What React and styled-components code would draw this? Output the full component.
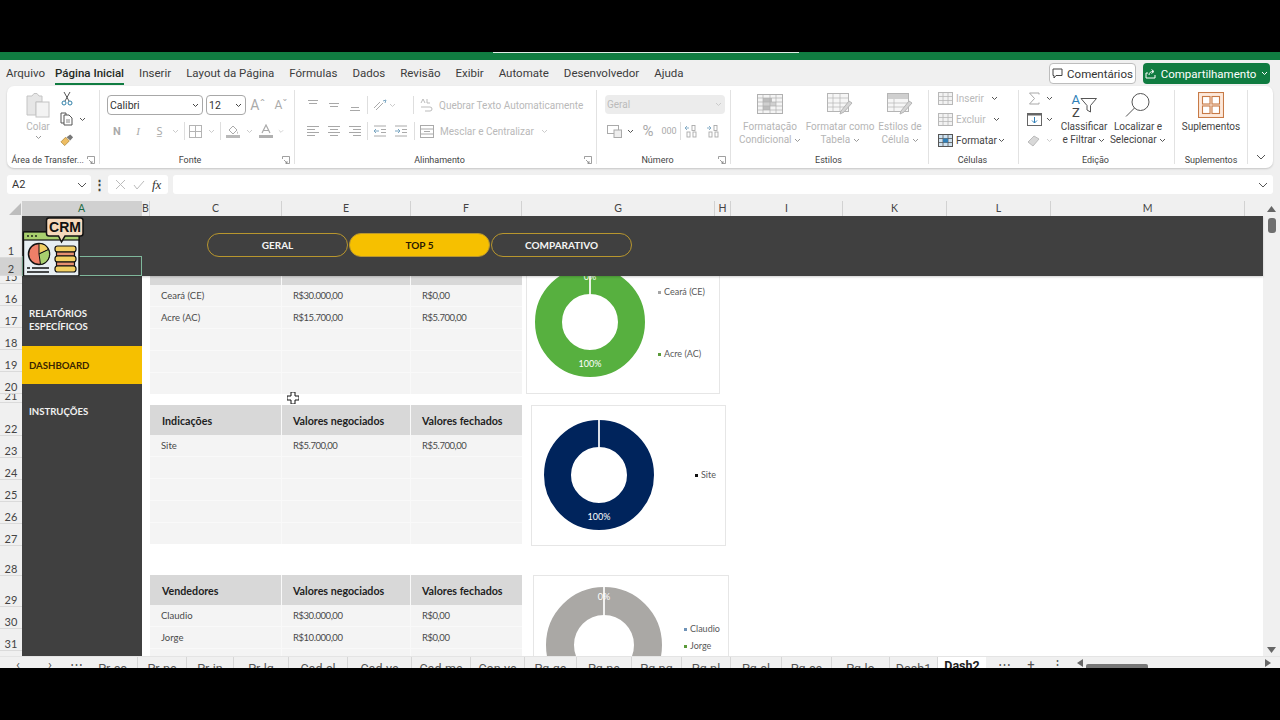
import React from 'react';
import styled, { createGlobalStyle } from 'styled-components';

const Global = createGlobalStyle`
  * { box-sizing: border-box; }
  html, body { margin: 0; padding: 0; background: #000; }
`;

const Screen = styled.div`
  width: 1280px; height: 720px; background: #000; overflow: hidden;
  display: flex; flex-direction: column; position: relative;
  font-family: Roboto, "Noto Sans", sans-serif;
`;
const TopBlack = styled.div`height: 52px; flex: none; background: #000;`;
const GreenBand = styled.div`height: 8px; flex: none; background: #107c41;`;
const ProgressLine = styled.div`width: 306px; height: 1px; margin-left: 493px; background: #dfeee6;`;
const Chrome = styled.div`height: 141px; flex: none; background: #f0f0f0; display: flex; flex-direction: column;`;

const MenuRow = styled.div`height: 26px; flex: none; display: flex; align-items: flex-start; padding: 3px 10px 0 6px;`;
const MenuItem = styled.div`
  font-size: 11.5px; line-height: 20px; margin-right: 15px; color: ${p => p.$on ? '#1f2a24' : '#3c3c3c'};
  font-weight: ${p => p.$on ? 500 : 400}; height: 20px; white-space: nowrap;
  box-shadow: ${p => p.$on ? '0 2px 0 #107c41' : 'none'};
  &:first-child { margin-right: 10px; }
`;
const MenuSpacer = styled.div`flex: 1;`;
const CommentBtn = styled.div`
  width: 87px; height: 21px; border: 1px solid #bdbdbd; border-radius: 4px; background: #fff; color: #333;
  font-size: 11.5px; display: flex; align-items: center; justify-content: center; gap: 4px; margin-right: 7px;
`;
const ShareBtn = styled.div`
  width: 127px; height: 21px; border-radius: 4px; background: #107c41; color: #fff;
  font-size: 11.5px; display: flex; align-items: center; justify-content: center; gap: 5px;
`;

const Ribbon = styled.div`
  height: 82px; flex: none; margin: 0 7px; width: 1266px; background: #fff; border-radius: 7px;
  box-shadow: 0 1px 2px rgba(0,0,0,.18); display: flex; padding: 4px 0;
  font-size: 10px; color: #444;
`;
const Group = styled.div`
  width: ${p => p.$w}px; flex: none; height: 74px; display: flex; flex-direction: column;
  border-right: ${p => p.$last ? 'none' : '1px solid #e2e2e2'};
`;
const GroupBody = styled.div`flex: 1; display: flex; min-height: 0;`;
const GroupStack = styled.div`flex: 1; display: flex; flex-direction: column; min-width: 0; padding-left: ${p => p.$pl || 0}px; padding-top: ${p => p.$pt || 0}px; gap: ${p => p.$gap || 0}px;`;
const GroupLabel = styled.div`
  height: 12px; flex: none; display: grid; grid-template-columns: 1fr auto 1fr; align-items: center;
  font-size: 9px; color: #444; line-height: 12px; margin-bottom: -2px; white-space: nowrap;
`;
const LabelText = styled.span`grid-column: 2; transform: translateX(${p => p.$dx || 0}px);`;
const LauncherWrap = styled.span`grid-column: 3; justify-self: end; display: flex; margin-right: 4px;`;

const PasteCol = styled.div`width: 30px; margin-left: 16px; display: flex; flex-direction: column; align-items: center; padding-top: 2px; color: #b5b5b5; font-size: 10px; line-height: 14px;`;
const PasteLabel = styled.span`margin: 2px 0 1px;`;
const ClipCol = styled.div`width: 32px; margin-left: 7px; display: flex; flex-direction: column; padding-top: 0; gap: 5px;`;
const IconRow = styled.div`
  height: ${p => p.$h || 16}px; flex: none; display: flex; align-items: center; padding-left: ${p => p.$pl || 0}px; margin-top: ${p => p.$mt || 0}px;
  white-space: nowrap;
`;
const Slot = styled.span`width: ${p => p.$w}px; flex: none; display: inline-flex; align-items: center; justify-content: center;`;
const VSep = styled.span`width: 1px; height: 18px; flex: none; background: #dedede;`;
const SelectBox = styled.div`
  width: ${p => p.$w}px; height: 20px; flex: none; border: 1px solid #a8a8a8; border-radius: 4px; margin-right: ${p => p.$mr || 0}px;
  display: flex; align-items: center; justify-content: space-between; padding: 0 3px 0 2px; font-size: 10.5px; color: #333;
`;
const GreySelect = styled(SelectBox)`
  border: none; background: #ececec; color: #bbb; font-size: 10px; height: 19px; margin-left: 8px;
`;
const GhostText = styled.span`font-size: 10px; color: #b9b9b9; margin-left: ${p => p.$ml || 0}px; white-space: nowrap;`;
const DarkText = styled.span`font-size: 10px; color: #444; margin-left: ${p => p.$ml || 0}px; white-space: nowrap;`;
const BigGlyph = styled.span`font-size: ${p => p.$s}px; color: ${p => p.$c || '#aaa'}; font-weight: ${p => p.$b || 400}; font-family: ${p => p.$serif ? '"Liberation Serif", serif' : 'inherit'}; font-style: ${p => p.$i ? 'italic' : 'normal'}; line-height: 1;`;
const BigBtn = styled.div`
  width: ${p => p.$w}px; margin-left: ${p => p.$ml || 0}px; flex: none; display: flex; flex-direction: column; align-items: center;
  padding-top: ${p => p.$pt ?? 3}px; font-size: 10px; line-height: 13px; text-align: center; color: ${p => p.$dis ? '#b5b5b5' : '#444'}; white-space: nowrap;
`;
const BigIconBox = styled.div`height: ${p => p.$h || 24}px; margin-bottom: ${p => p.$mb ?? 4}px; display: flex; align-items: center; justify-content: center;`;
const CollapseCol = styled.div`flex: 1; display: flex; align-items: flex-end; justify-content: center; padding-bottom: 4px;`;

const FormulaRow = styled.div`height: 19px; flex: none; margin: 7px 7px 0; display: flex; align-items: stretch;`;
const NameBox = styled.div`width: 84px; flex: none; background: #fff; border-radius: 3px; font-size: 11px; color: #333; display: flex; align-items: center; justify-content: space-between; padding: 0 4px 0 5px;`;
const Dots = styled.div`width: 17px; flex: none; display: flex; align-items: center; justify-content: center; color: #444; font-size: 13px; font-weight: 700;`;
const FxBox = styled.div`width: 60px; flex: none; background: #fff; border-radius: 3px; display: flex; align-items: center; justify-content: space-around; padding: 0 3px;`;
const FormulaInput = styled.div`flex: 1; margin-left: 5px; background: #fff; border-radius: 3px; display: flex; align-items: center; justify-content: flex-end; padding-right: 5px;`;

const ColHeaders = styled.div`height: 15px; flex: none; display: flex; background: #f0f0f0;`;
const Corner = styled.div`width: 22px; flex: none; display: flex; align-items: flex-end; justify-content: flex-end; padding: 0 1px 1px 0;`;
const ColCell = styled.div`
  width: ${p => p.$w}px; flex: none; font-family: Lato, sans-serif; font-size: 10.5px; line-height: 14px; text-align: center; color: #444;
  border-right: 1px solid #d2d2d2; background: ${p => p.$sel ? '#d0d0d0' : 'transparent'};
  color: ${p => p.$sel ? '#1c6b45' : '#444'};
`;
const ColSpacer = styled.div`flex: 1; display: flex; justify-content: flex-end; align-items: center; padding-right: 4px;`;

const Sheet = styled.div`height: 440px; flex: none; display: flex; background: #fff; position: relative; overflow: hidden;`;
const RowHeaders = styled.div`width: 22px; flex: none; background: #f0f0f0; display: flex; flex-direction: column; overflow: hidden;`;
const RowHead = styled.div`
  height: ${p => p.$h}px; flex: none; display: flex; align-items: flex-end; justify-content: center;
  font-family: Lato, sans-serif; font-size: 11px; line-height: 12px; color: #444; border-bottom: 1px solid #dadada; overflow: hidden;
  background: ${p => p.$sel ? '#d2d2d2' : 'transparent'};
`;
const Main = styled.div`flex: 1; min-width: 0; display: flex; flex-direction: column;`;
const Band = styled.div`
  height: 60px; flex: none; background: #404040; display: flex; gap: 1px; align-items: center; padding: 0 0 3px 185px;
  position: relative; z-index: 2; box-shadow: 0 1px 2px rgba(0,0,0,.2);
`;
const Pill = styled.div`
  width: 141px; height: 24px; border-radius: 12px; border: 1px solid #b8962e; background: ${p => p.$on ? '#f6c000' : 'transparent'};
  color: ${p => p.$on ? '#2b1a00' : '#f4f4f4'}; font-family: Lato, sans-serif; font-weight: 700; font-size: 10px;
  display: flex; align-items: center; justify-content: center;
`;
const Below = styled.div`flex: 1; min-height: 0; display: flex;`;
const Sidebar = styled.div`width: 120px; flex: none; background: #404040; display: flex; flex-direction: column; padding-top: 31px;`;
const NavLabel = styled.div`
  font-family: Lato, sans-serif; font-weight: 700; font-size: 9.6px; line-height: 13px; color: ${p => p.$on ? '#3a2500' : '#f1f1f1'};
  padding-left: 7px; background: ${p => p.$on ? '#f6c000' : 'transparent'}; height: ${p => p.$h}px; margin-top: ${p => p.$mt || 0}px;
  display: flex; align-items: center;
`;
const Content = styled.div`flex: 1; min-width: 0; overflow: hidden; padding-left: 8px;`;
const Section = styled.div`display: flex; align-items: flex-start; margin-top: ${p => p.$mt}px;`;
const Table = styled.div`width: 372px; flex: none; margin-top: ${p => p.$mt || 0}px; display: grid; grid-template-columns: 131px 128px 111px; gap: 1px; background: #f9f9f9;`;
const HeadCell = styled.div`
  height: 30px; background: #d8d8d8; font-family: Lato, sans-serif; font-weight: 700; font-size: 10.7px; color: #1e1e1e;
  display: flex; align-items: center; padding-left: ${p => p.$pl || 11}px; white-space: nowrap; margin-bottom: -1px;
`;
const Cell = styled.div`
  height: 21px; background: #f4f4f4; font-family: Lato, sans-serif; font-size: 9.5px; color: #4a4a4a;
  letter-spacing: ${p => p.$num ? '-0.45px' : '0'};
  display: flex; align-items: center; padding-left: 11px; white-space: nowrap;
`;
const Chart = styled.div`
  width: ${p => p.$w}px; height: ${p => p.$h}px; flex: none; margin-left: ${p => p.$ml}px; border: 1px solid #e6e6e6; background: #fff;
  display: flex; align-items: flex-start; padding: ${p => p.$pt}px 0 0 ${p => p.$pl}px; overflow: hidden;
`;
const Legend = styled.div`
  margin-left: ${p => p.$ml}px; margin-top: ${p => p.$mt}px; display: flex; flex-direction: column; gap: ${p => p.$gap || 0}px;
`;
const LegendItem = styled.div`
  display: flex; align-items: center; gap: 3px; font-family: Lato, sans-serif; font-size: 9px; line-height: 12px; color: #595959;
  &::before { content: ''; width: 3px; height: 3px; background: ${p => p.$c}; flex: none; }
`;
const ScrollBar = styled.div`width: 17px; flex: none; background: #f0f0f0; display: flex; flex-direction: column; align-items: center; justify-content: space-between; padding: 2px 0 3px;`;
const Thumb = styled.div`width: 8px; height: 15px; border-radius: 3px; background: #6f6f6f;`;
const SelectionBox = styled.div`
  position: absolute; left: 22px; top: 40px; width: 120px; height: 20px; border: 1px solid #7fb79b; z-index: 3;
`;
const LogoWrap = styled.div`position: absolute; left: 22px; top: 0; z-index: 4; display: flex;`;
const CursorWrap = styled.div`position: absolute; left: 287px; top: 176px; z-index: 5; display: flex;`;

const TabBar = styled.div`height: 12px; flex: none; background: #f0f0f0; display: flex; overflow: hidden; font-size: 12.5px; color: #444; border-top: 1px solid #e4e4e4;`;
const TabNavSlot = styled.div`width: ${p => p.$w}px; flex: none; text-align: center; line-height: 16px; font-size: 13px; color: #555;`;
const Tab = styled.div`
  width: ${p => p.$w}px; flex: none; text-align: center; padding-top: ${p => p.$on ? 2 : 5}px; line-height: 14px; white-space: nowrap;
  border-right: ${p => p.$on ? 'none' : '1px solid #d6d6d6'};
  background: ${p => p.$on ? '#fff' : 'transparent'}; font-weight: ${p => p.$on ? 700 : 400}; color: ${p => p.$on ? '#222' : '#555'};
`;
const HScroll = styled.div`width: 62px; height: 8px; flex: none; margin-top: 7px; background: #777; border-radius: 2px;`;
const TabSpacer = styled.div`flex: 1;`;
const Footer = styled.div`flex: 1; background: #000;`;

const Chev = ({ c = '#999' }) => (
  <svg width="7" height="5" viewBox="0 0 7 5"><path d="M1 1l2.5 2.5L6 1" fill="none" stroke={c} strokeWidth="1" /></svg>
);
const ChevBig = () => (
  <svg width="10" height="6" viewBox="0 0 10 6"><path d="M1 1l4 4 4-4" fill="none" stroke="#555" strokeWidth="1" /></svg>
);
const Launcher = () => (
  <svg width="8" height="8" viewBox="0 0 8 8"><path d="M.5 3V.5H7.500V7.500H4M2 4l3 3M5 5v2H3" fill="none" stroke="#888" strokeWidth=".8" /></svg>
);
const Paste = () => (
  <svg width="26" height="26" viewBox="0 0 26 26" fill="none" stroke="#c4c4c4" strokeWidth="1">
    <path d="M2 4h5l2-2.500h3L14 4h3v6H11v13H2z" fill="#e6e6e6" /><rect x="11" y="10" width="13" height="15" fill="#f3f3f3" />
  </svg>
);
const Scissors = () => (
  <svg width="12" height="15" viewBox="0 0 12 15" fill="none" stroke="#555" strokeWidth="1">
    <path d="M3 1l5 9M9 1L4 10" /><circle cx="3" cy="12" r="2" stroke="#2f7fa8" /><circle cx="9" cy="12" r="2" stroke="#2f7fa8" />
  </svg>
);
const Copy = () => (
  <svg width="14" height="14" viewBox="0 0 14 14" fill="none" stroke="#555" strokeWidth="1">
    <path d="M1 1h5v2M1 1v10h3" /><path d="M4 3h5l3 3v7H4z" fill="#fff" /><path d="M6 8h4M6 10h4" stroke="#888" />
  </svg>
);
const Brush = () => (
  <svg width="15" height="14" viewBox="0 0 15 14">
    <path d="M1 9l5-5 4 4-5 5z" fill="#eebd62" stroke="#a07a2a" strokeWidth=".7" /><path d="M7 4l4-3 3 3-3 3.500z" fill="#777" />
  </svg>
);
const Lines = ({ kind }) => {
  const sets = {
    t: [[2, 12, 2], [3, 11, 5]], m: [[2, 12, 5], [3, 11, 8]], b: [[3, 11, 9], [2, 12, 12]],
    l: [[1, 13, 2], [1, 9, 5], [1, 13, 8], [1, 9, 11]], c: [[1, 13, 2], [3, 11, 5], [1, 13, 8], [3, 11, 11]], r: [[1, 13, 2], [5, 13, 5], [1, 13, 8], [5, 13, 11]],
  };
  return (
    <svg width="14" height="14" viewBox="0 0 14 14" stroke="#a8a8a8" strokeWidth="1">
      {sets[kind].map(([a, b, y], i) => <line key={i} x1={a} x2={b} y1={y + .5} y2={y + .5} />)}
    </svg>
  );
};
const Indent = ({ rev }) => (
  <svg width="14" height="12" viewBox="0 0 14 12" fill="none" stroke="#aaa" strokeWidth="1">
    <path d="M1 1h12M1 11h12M8 4.500h5M8 7.500h5" />
    <path d={rev ? 'M6 6H1M3 4L1 6l2 2' : 'M1 6h5M4 4l2 2-2 2'} stroke="#7aa6c2" />
  </svg>
);
const Orient = () => (
  <svg width="15" height="13" viewBox="0 0 15 13" fill="none" stroke="#aaa"><path d="M2 9l6-6M4 11l7-7" /><path d="M11 2l3-1-1 3" stroke="#7aa6c2" /></svg>
);
const Borders = () => (
  <svg width="13" height="13" viewBox="0 0 13 13" fill="none" stroke="#b4b4b4"><rect x=".5" y=".5" width="12" height="12" /><path d="M6.500 0v13M0 6.500h13" /></svg>
);
const Fill = () => (
  <svg width="14" height="14" viewBox="0 0 14 14"><path d="M3 6l4-4 4 4-4 4z" fill="none" stroke="#aaa" /><path d="M11 7l1 2-1 1z" fill="#aaa" /><rect x="0" y="11" width="14" height="3" fill="#b9b9b9" /></svg>
);
const ColorA = () => (
  <svg width="14" height="14" viewBox="0 0 14 14"><path d="M3 9l4-8 4 8M4.500 6.500h5" fill="none" stroke="#aaa" strokeWidth="1.200" /><rect x="0" y="11" width="14" height="3" fill="#b0b0b0" /></svg>
);
const Merge = () => (
  <svg width="14" height="13" viewBox="0 0 14 13" fill="none" stroke="#aaa"><rect x=".5" y=".5" width="13" height="12" /><path d="M1 4h12M1 9h12M4 6.500h6" /></svg>
);
const WrapIco = () => (
  <svg width="14" height="14" viewBox="0 0 14 14" fill="none" stroke="#bbb"><path d="M2 5l2-4 2 4M8 1v4h3M2 9h9a1.500 1.500 0 010 4H6" /></svg>
);
const Money = () => (
  <svg width="15" height="13" viewBox="0 0 15 13" fill="none" stroke="#aaa"><rect x=".5" y=".5" width="11" height="8" /><rect x="7" y="5" width="7.500" height="7.500" fill="#eee" /></svg>
);
const Dec = ({ inc }) => (
  <svg width="15" height="13" viewBox="0 0 15 13" fill="none" stroke="#aaa" strokeWidth=".9">
    <path d={inc ? 'M1 3h4M3 1 1 3l2 2' : 'M5 3H1M3 1l2 2-2 2'} stroke="#7aa6c2" />
    <rect x="8" y=".5" width="3" height="5" /><rect x="3" y="7" width="3" height="5" /><rect x="9" y="7" width="3" height="5" />
  </svg>
);
const CondFmt = () => (
  <svg width="26" height="20" viewBox="0 0 26 20" stroke="#b0b0b0" fill="#f4f4f4" strokeWidth="1">
    <rect x=".5" y=".5" width="25" height="19" /><rect x="6" y="4" width="9" height="4" fill="#bdbdbd" stroke="none" /><rect x="6" y="8" width="13" height="4" fill="#d0d0d0" stroke="none" /><rect x="6" y="12" width="7" height="4" fill="#bdbdbd" stroke="none" />
    <path d="M0 4h26M0 8h26M0 12h26M0 16h26M6 0v20M13 0v20M19 0v20" fill="none" strokeWidth=".7" />
  </svg>
);
const TableFmt = () => (
  <svg width="26" height="22" viewBox="0 0 26 22" stroke="#b5b5b5" fill="#f6f6f6" strokeWidth="1">
    <rect x=".5" y=".5" width="21" height="18" /><path d="M0 5h22M0 10h22M0 14h22M6 0v19M13 0v19" fill="none" strokeWidth=".7" />
    <path d="M14 18l8-10 3 2-8 9-4 2z" fill="#d5d5d5" />
  </svg>
);
const CellStyle = () => (
  <svg width="26" height="22" viewBox="0 0 26 22" stroke="#b5b5b5" fill="#f6f6f6" strokeWidth="1">
    <rect x=".5" y=".5" width="21" height="18" /><rect x="1" y="1" width="20" height="5" fill="#cfcfcf" stroke="none" /><path d="M0 10h22M0 14h22M7 6v13" fill="none" strokeWidth=".7" />
    <path d="M14 18l8-10 3 2-8 9-4 2z" fill="#d5d5d5" />
  </svg>
);
const CellIco = ({ dark, kind }) => (
  <svg width="15" height="13" viewBox="0 0 15 13" fill="none" stroke={dark ? '#555' : '#b8b8b8'}>
    <rect x=".5" y=".5" width="14" height="12" fill={dark ? '#cfe2f0' : '#f2f2f2'} />
    <path d="M0 4.500h15M0 8.500h15M5 0v13M10 0v13" strokeWidth=".8" />
    {kind === 'f' && <rect x="5" y="4.500" width="5" height="4" fill="#2f7fb8" stroke="none" />}
  </svg>
);
const Sum = () => <svg width="12" height="13" viewBox="0 0 12 13" fill="none" stroke="#a8a8a8"><path d="M11 2.500V1H1.500L6.500 6.500 1.500 12H11v-1.500" /></svg>;
const FillDown = () => (
  <svg width="15" height="13" viewBox="0 0 15 13" fill="none"><rect x=".5" y=".5" width="14" height="12" stroke="#666" /><rect x="0" y="0" width="15" height="2.500" fill="#666" /><path d="M7.500 4v6M5 7.500l2.500 2.500L10 7.500" stroke="#2f7fb8" /></svg>
);
const Eraser = () => <svg width="14" height="13" viewBox="0 0 14 13"><path d="M1 8l6-6 5 3-6 7z" fill="#d8d8d8" stroke="#bbb" /></svg>;
const SortFilter = () => (
  <svg width="26" height="26" viewBox="0 0 26 26" fill="none">
    <path d="M10 6.500h15.500L19.500 13.500v6.500l-3.500-2v-4.500z" fill="#fff" stroke="#555" />
    <text x="0.500" y="12" fontFamily="Roboto, sans-serif" fontSize="13" fill="#2f7fb8">A</text>
    <text x="1" y="25" fontFamily="Roboto, sans-serif" fontSize="13" fill="#444">Z</text>
  </svg>
);
const Search = () => (
  <svg width="26" height="26" viewBox="0 0 26 26" fill="none" stroke="#555"><circle cx="15.500" cy="10" r="8.500" /><path d="M9.500 16L1 24.500" /></svg>
);
const Addins = () => (
  <svg width="26" height="26" viewBox="0 0 26 26" fill="#fde9dc" stroke="#c77a46" strokeWidth="1.100">
    <rect x=".5" y=".5" width="25" height="25" /><rect x="4.500" y="4.500" width="7.500" height="7.500" fill="#fff" /><rect x="14" y="4.500" width="7.500" height="7.500" fill="#fff" /><rect x="4.500" y="14" width="7.500" height="7.500" fill="#fff" /><rect x="14" y="14" width="7.500" height="7.500" fill="#fff" />
  </svg>
);
const Bubble = () => <svg width="11" height="11" viewBox="0 0 11 11" fill="none" stroke="#444"><path d="M1 1h9v6.500H4L2 10V7.500H1z" /></svg>;
const ShareIco = () => <svg width="11" height="11" viewBox="0 0 11 11" fill="none" stroke="#fff"><path d="M3 5H1v5h9V7M4 7c0-2.500 2-3.500 4-3.500M6.500 1.500L9 3.500 6.500 5.500" /></svg>;
const CornerTri = () => <svg width="12" height="12" viewBox="0 0 12 12"><path d="M12 0v12H0z" fill="#bdbdbd" /></svg>;
const UpTri = () => <svg width="9" height="6" viewBox="0 0 9 6"><path d="M4.500 0L9 6H0z" fill="#666" /></svg>;
const DownTri = () => <svg width="9" height="6" viewBox="0 0 9 6"><path d="M0 0h9L4.500 6z" fill="#666" /></svg>;
const LeftTri = () => <svg width="6" height="8" viewBox="0 0 6 8"><path d="M6 0v8L0 4z" fill="#666" /></svg>;
const RightTri = () => <svg width="6" height="8" viewBox="0 0 6 8"><path d="M0 0v8l6-4z" fill="#666" /></svg>;

const Logo = () => (
  <svg width="62" height="60" viewBox="0 0 62 60">
    <rect x="1.500" y="16" width="55.500" height="44" rx="1" fill="#e7eef2" stroke="#111" strokeWidth="1.400" />
    <rect x="1.500" y="16" width="55.500" height="8" fill="#a8cf6e" stroke="#111" strokeWidth="1.200" />
    <circle cx="6" cy="20" r=".9" fill="#111" /><circle cx="10" cy="20" r=".9" fill="#111" /><circle cx="14" cy="20" r=".9" fill="#111" />
    <path d="M27 2h31.500a2.500 2.500 0 012.500 2.500v13a2.500 2.500 0 01-2.500 2.500H43l-3.500 6-3-6H27a2.500 2.500 0 01-2.500-2.500v-13A2.500 2.500 0 0127 2z" fill="#f5d8bb" stroke="#111" strokeWidth="1.500" />
    <text x="43" y="16" textAnchor="middle" fontFamily="'Liberation Sans', sans-serif" fontWeight="700" fontSize="14" fill="#111">CRM</text>
    <circle cx="17" cy="38" r="10.500" fill="#ee7f68" stroke="#111" strokeWidth="1.500" />
    <path d="M17 38V27.500a10.500 10.500 0 019.500 6z" fill="#f1cf62" stroke="#111" strokeWidth="1" />
    <path d="M17 38l9.500-4.500a10.500 10.500 0 01-8 15z" fill="#a8cf6e" stroke="#111" strokeWidth="1" />
    <g stroke="#111" strokeWidth="1.200">
      <rect x="33" y="30" width="21" height="6" rx="2.500" fill="#f1cf62" />
      <rect x="34.500" y="36" width="18" height="4" fill="#e58f70" />
      <rect x="33" y="40" width="21" height="6" rx="2.500" fill="#f1cf62" />
      <rect x="34.500" y="46" width="18" height="4" fill="#e58f70" />
      <rect x="33" y="50" width="21" height="6" rx="2.500" fill="#f1cf62" />
    </g>
    <path d="M5 52h3M10 52h17M5 56h22" stroke="#111" strokeWidth="1.400" />
  </svg>
);

const Donut = ({ size, inner, color, low, high }) => {
  const c = size / 2;
  const r = (c + inner) / 2;
  return (
    <svg width={size} height={size} viewBox={`0 0 ${size} ${size}`}>
      <circle cx={c} cy={c} r={r} fill="none" stroke={color} strokeWidth={c - inner} />
      <line x1={c} x2={c} y1={0} y2={c - inner + 1} stroke="#fff" strokeWidth="2" opacity=".85" />
      {low && <text x={c} y={13} textAnchor="middle" fontFamily="Lato, sans-serif" fontSize="9" fill="#fff">{low}</text>}
      {high && <text x={c} y={size - 10} textAnchor="middle" fontFamily="Lato, sans-serif" fontSize="9" fill="#fff">{high}</text>}
    </svg>
  );
};

const menu = ['Arquivo', 'Página Inicial', 'Inserir', 'Layout da Página', 'Fórmulas', 'Dados', 'Revisão', 'Exibir', 'Automate', 'Desenvolvedor', 'Ajuda'];
const cols = [['A', 120, true], ['B', 8], ['C', 132], ['E', 129], ['F', 111], ['G', 193], ['H', 16], ['I', 112], ['K', 104], ['L', 104], ['M', 194]];
const rows = [['1', 42], ['2', 18, true], ['15', 8], ['16', 22], ['17', 22], ['18', 22], ['19', 22], ['20', 22], ['21', 9], ['22', 33], ['23', 22], ['24', 22], ['25', 22], ['26', 22], ['27', 22], ['28', 30], ['29', 31], ['30', 22], ['31', 22], ['', 6]];
const tabs = [['Pr-cc', 50], ['Pr-pe', 49], ['Pr-in', 47], ['Pr-lg', 55], ['Cad-cl', 59], ['Cad-ve', 64], ['Cad-me', 59], ['Con-ve', 54], ['Pg-ge', 52], ['Pg-pe', 55], ['Pg-pg', 50], ['Pg-pl', 49], ['Pg-cl', 51], ['Pg-ce', 50], ['Pg-lo', 58], ['Dash1', 48]];

const DataTable = ({ head, data, blanks, mt }) => (
  <Table $mt={mt}>
    {head.map((h, i) => <HeadCell key={i} $pl={i === 0 ? 12 : 11}>{h}</HeadCell>)}
    {data.flat().map((v, i) => <Cell key={i} $num={i % 3 !== 0}>{v}</Cell>)}
    {Array.from({ length: blanks * 3 }, (_, i) => <Cell key={`b${i}`} />)}
  </Table>
);

export default function App() {
  return (
    <Screen>
      <Global />
      <TopBlack />
      <GreenBand><ProgressLine /></GreenBand>
      <Chrome>
        <MenuRow>
          {menu.map((m, i) => <MenuItem key={m} $on={i === 1}>{m}</MenuItem>)}
          <MenuSpacer />
          <CommentBtn><Bubble />Comentários</CommentBtn>
          <ShareBtn><ShareIco />Compartilhamento<Chev c="#fff" /></ShareBtn>
        </MenuRow>
        <Ribbon>
          <Group $w={93}>
            <GroupBody>
              <PasteCol><Paste /><PasteLabel>Colar</PasteLabel><Chev /></PasteCol>
              <ClipCol>
                <IconRow><Slot $w={14}><Scissors /></Slot></IconRow>
                <IconRow><Slot $w={14}><Copy /></Slot><Slot $w={16}><Chev c="#555" /></Slot></IconRow>
                <IconRow><Slot $w={14}><Brush /></Slot></IconRow>
              </ClipCol>
            </GroupBody>
            <GroupLabel><LabelText $dx={-3}>Área de Transfer...</LabelText><LauncherWrap><Launcher /></LauncherWrap></GroupLabel>
          </Group>
          <Group $w={195}>
            <GroupStack $pl={7} $pt={5}>
              <IconRow $h={20}>
                <SelectBox $w={96} $mr={3}>Calibri<Chev c="#444" /></SelectBox>
                <SelectBox $w={40}>12<Chev c="#444" /></SelectBox>
                <Slot $w={24}><BigGlyph $s={14}>Aˆ</BigGlyph></Slot>
                <Slot $w={22}><BigGlyph $s={12}>Aˇ</BigGlyph></Slot>
              </IconRow>
              <IconRow $h={18} $mt={7}>
                <Slot $w={20}><BigGlyph $s={11} $b={700}>N</BigGlyph></Slot>
                <Slot $w={22}><BigGlyph $s={11} $i $serif>I</BigGlyph></Slot>
                <Slot $w={21}><BigGlyph $s={11}>S̲</BigGlyph></Slot>
                <Slot $w={10}><Chev c="#ccc" /></Slot>
                <Slot $w={4} /><VSep /><Slot $w={3} />
                <Slot $w={14}><Borders /></Slot>
                <Slot $w={18}><Chev c="#ccc" /></Slot>
                <VSep />
                <Slot $w={23}><Fill /></Slot>
                <Slot $w={10}><Chev c="#ccc" /></Slot>
                <Slot $w={24}><ColorA /></Slot>
                <Slot $w={6}><Chev c="#ccc" /></Slot>
              </IconRow>
            </GroupStack>
            <GroupLabel><LabelText $dx={-7}>Fonte</LabelText><LauncherWrap><Launcher /></LauncherWrap></GroupLabel>
          </Group>
          <Group $w={302}>
            <GroupStack $pl={7} $pt={6}>
              <IconRow $h={18}>
                <Slot $w={21}><Lines kind="t" /></Slot><Slot $w={21}><Lines kind="m" /></Slot><Slot $w={21}><Lines kind="b" /></Slot>
                <Slot $w={2} /><VSep /><Slot $w={2} />
                <Slot $w={18}><Orient /></Slot><Slot $w={8}><Chev c="#ccc" /></Slot>
                <Slot $w={17} /><VSep />
                <Slot $w={24}><WrapIco /></Slot>
                <GhostText $ml={1}>Quebrar Texto Automaticamente</GhostText>
              </IconRow>
              <IconRow $h={18} $mt={8}>
                <Slot $w={21}><Lines kind="l" /></Slot><Slot $w={21}><Lines kind="c" /></Slot><Slot $w={21}><Lines kind="r" /></Slot>
                <Slot $w={2} /><VSep /><Slot $w={1} />
                <Slot $w={21}><Indent rev /></Slot><Slot $w={21}><Indent /></Slot>
                <Slot $w={3} /><VSep />
                <Slot $w={24}><Merge /></Slot>
                <GhostText $ml={1}>Mesclar e Centralizar</GhostText>
                <Slot $w={22}><Chev c="#ccc" /></Slot>
              </IconRow>
            </GroupStack>
            <GroupLabel><LabelText $dx={-6}>Alinhamento</LabelText><LauncherWrap><Launcher /></LauncherWrap></GroupLabel>
          </Group>
          <Group $w={134}>
            <GroupStack $pt={5}>
              <GreySelect $w={120}>Geral<Chev c="#ccc" /></GreySelect>
              <IconRow $h={18} $mt={8} $pl={9}>
                <Slot $w={16}><Money /></Slot>
                <Slot $w={16}><Chev c="#555" /></Slot>
                <Slot $w={20}><BigGlyph $s={15}>%</BigGlyph></Slot>
                <Slot $w={22}><BigGlyph $s={9}>000</BigGlyph></Slot>
                <VSep />
                <Slot $w={21}><Dec inc /></Slot>
                <Slot $w={23}><Dec /></Slot>
              </IconRow>
            </GroupStack>
            <GroupLabel><LabelText $dx={-6}>Número</LabelText><LauncherWrap><Launcher /></LauncherWrap></GroupLabel>
          </Group>
          <Group $w={198}>
            <GroupBody>
              <BigBtn $w={72} $ml={3} $pt={2} $dis><BigIconBox><CondFmt /></BigIconBox>Formatação<span>Condicional <Chev /></span></BigBtn>
              <BigBtn $w={68} $pt={2} $dis><BigIconBox><TableFmt /></BigIconBox>Formatar como<span>Tabela <Chev /></span></BigBtn>
              <BigBtn $w={52} $pt={2} $dis><BigIconBox><CellStyle /></BigIconBox>Estilos de<span>Célula <Chev /></span></BigBtn>
            </GroupBody>
            <GroupLabel><LabelText $dx={-1}>Estilos</LabelText></GroupLabel>
          </Group>
          <Group $w={90}>
            <GroupStack $pl={9} $gap={5}>
              <IconRow><CellIco /><GhostText $ml={3}>Inserir</GhostText><Slot $w={22}><Chev c="#555" /></Slot></IconRow>
              <IconRow><CellIco /><GhostText $ml={3}>Excluir</GhostText><Slot $w={22}><Chev c="#555" /></Slot></IconRow>
              <IconRow><CellIco dark kind="f" /><DarkText $ml={3}>Formatar</DarkText><Slot $w={10}><Chev c="#555" /></Slot></IconRow>
            </GroupStack>
            <GroupLabel><LabelText $dx={-1}>Células</LabelText></GroupLabel>
          </Group>
          <Group $w={156}>
            <GroupBody>
              <ClipCol>
                <IconRow><Slot $w={16}><Sum /></Slot><Slot $w={14}><Chev c="#555" /></Slot></IconRow>
                <IconRow><Slot $w={16}><FillDown /></Slot><Slot $w={14}><Chev c="#555" /></Slot></IconRow>
                <IconRow><Slot $w={16}><Eraser /></Slot><Slot $w={14}><Chev c="#ccc" /></Slot></IconRow>
              </ClipCol>
              <BigBtn $w={52} $pt={2}><BigIconBox $h={26} $mb={2}><SortFilter /></BigIconBox>Classificar<span>e Filtrar <Chev c="#555" /></span></BigBtn>
              <BigBtn $w={56} $pt={2}><BigIconBox $h={26} $mb={2}><Search /></BigIconBox>Localizar e<span>Selecionar <Chev c="#555" /></span></BigBtn>
            </GroupBody>
            <GroupLabel><LabelText $dx={-1}>Edição</LabelText></GroupLabel>
          </Group>
          <Group $w={73}>
            <GroupBody>
              <BigBtn $w={72} $pt={2}><BigIconBox $h={26} $mb={2}><Addins /></BigIconBox>Suplementos</BigBtn>
            </GroupBody>
            <GroupLabel><LabelText>Suplementos</LabelText></GroupLabel>
          </Group>
          <Group $w={25} $last><CollapseCol><ChevBig /></CollapseCol></Group>
        </Ribbon>
        <FormulaRow>
          <NameBox>A2<ChevBig /></NameBox>
          <Dots>⋮</Dots>
          <FxBox>
            <svg width="11" height="11" viewBox="0 0 11 11"><path d="M1 1l9 9M10 1l-9 9" stroke="#bbb" /></svg>
            <svg width="12" height="10" viewBox="0 0 12 10"><path d="M1 5l3 4 7-8" stroke="#bbb" fill="none" /></svg>
            <BigGlyph $s={13} $c="#333" $i $serif>fx</BigGlyph>
          </FxBox>
          <FormulaInput><ChevBig /></FormulaInput>
        </FormulaRow>
      </Chrome>
      <ColHeaders>
        <Corner><CornerTri /></Corner>
        {cols.map(([l, w, s]) => <ColCell key={l} $w={w} $sel={s}>{l}</ColCell>)}
        <ColSpacer><UpTri /></ColSpacer>
      </ColHeaders>
      <Sheet>
        <RowHeaders>
          {rows.map(([l, h, s], i) => <RowHead key={i} $h={h} $sel={s}>{l}</RowHead>)}
        </RowHeaders>
        <Main>
          <Band>
            <Pill>GERAL</Pill>
            <Pill $on>TOP 5</Pill>
            <Pill>COMPARATIVO</Pill>
          </Band>
          <Below>
            <Sidebar>
              <NavLabel $h={26}>RELATÓRIOS<br />ESPECÍFICOS</NavLabel>
              <NavLabel $on $h={38} $mt={13}>DASHBOARD</NavLabel>
              <NavLabel $h={13} $mt={21}>INSTRUÇÕES</NavLabel>
            </Sidebar>
            <Content>
              <Section $mt={-25}>
                <DataTable mt={4} head={['', '', '']} data={[['Ceará (CE)', 'R$30.000,00', 'R$0,00'], ['Acre (AC)', 'R$15.700,00', 'R$5.700,00']]} blanks={3} />
                <Chart $w={194} $h={143} $ml={4} $pt={15} $pl={8}>
                  <Donut size={110} inner={28} color="#57b03f" low="0%" high="100%" />
                  <Legend $ml={13} $mt={19} $gap={50}>
                    <LegendItem $c="#a5a5a5">Ceará (CE)</LegendItem>
                    <LegendItem $c="#5b9a3a">Acre (AC)</LegendItem>
                  </Legend>
                </Chart>
              </Section>
              <Section $mt={11}>
                <DataTable head={['Indicações', 'Valores negociados', 'Valores fechados']} data={[['Site', 'R$5.700,00', 'R$5.700,00']]} blanks={4} />
                <Chart $w={195} $h={141} $ml={9} $pt={14} $pl={12}>
                  <Donut size={110} inner={28} color="#00245c" high="100%" />
                  <Legend $ml={41} $mt={49}>
                    <LegendItem $c="#111">Site</LegendItem>
                  </Legend>
                </Chart>
              </Section>
              <Section $mt={29}>
                <DataTable head={['Vendedores', 'Valores negociados', 'Valores fechados']} data={[['Claudio', 'R$30.000,00', 'R$0,00'], ['Jorge', 'R$10.000,00', 'R$0,00']]} blanks={1} />
                <Chart $w={196} $h={141} $ml={11} $pt={11} $pl={12}>
                  <Donut size={116} inner={30} color="#aaa8a5" low="0%" />
                  <Legend $ml={22} $mt={36} $gap={5}>
                    <LegendItem $c="#6f93b8">Claudio</LegendItem>
                    <LegendItem $c="#5b9a3a">Jorge</LegendItem>
                  </Legend>
                </Chart>
              </Section>
            </Content>
          </Below>
        </Main>
        <ScrollBar><Thumb /><DownTri /></ScrollBar>
        <SelectionBox />
        <LogoWrap><Logo /></LogoWrap>
        <CursorWrap>
          <svg width="12" height="12" viewBox="0 0 12 12"><path d="M4 0h4v4h4v4H8v4H4V8H0V4h4z" fill="#fff" stroke="#111" /></svg>
        </CursorWrap>
      </Sheet>
      <TabBar>
        <TabNavSlot $w={36}>‹</TabNavSlot>
        <TabNavSlot $w={28}>›</TabNavSlot>
        <TabNavSlot $w={24}>⋯</TabNavSlot>
        {tabs.map(([t, w]) => <Tab key={t} $w={w}>{t}</Tab>)}
        <Tab $on $w={48}>Dash2</Tab>
        <TabNavSlot $w={36}>⋯</TabNavSlot>
        <TabNavSlot $w={18}>+</TabNavSlot>
        <TabNavSlot $w={34}>⋮</TabNavSlot>
        <Slot $w={12}><LeftTri /></Slot>
        <HScroll />
        <TabSpacer />
        <Slot $w={24}><RightTri /></Slot>
      </TabBar>
      <Footer />
    </Screen>
  );
}
